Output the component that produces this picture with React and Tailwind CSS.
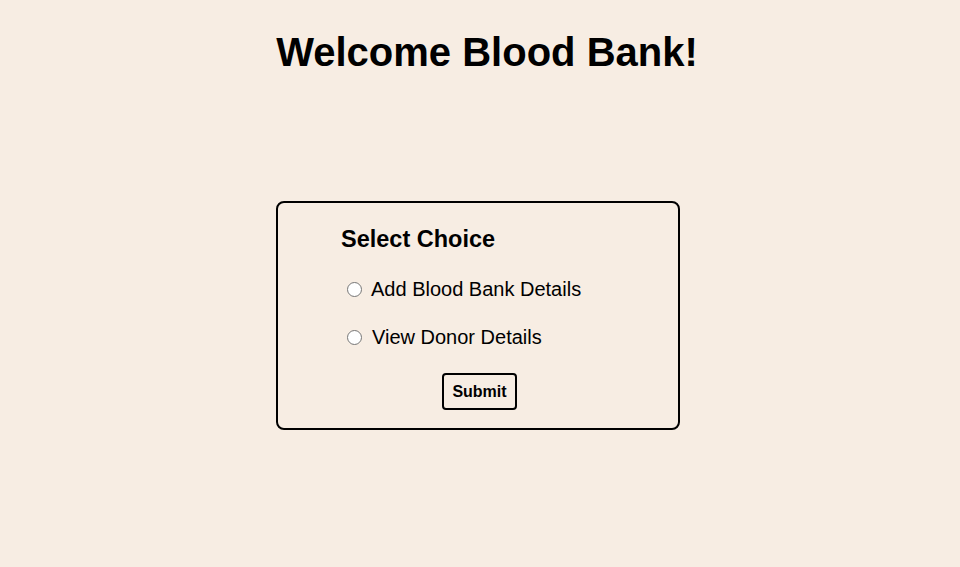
export default function App() {
  return (
    <div className="min-h-screen bg-[#f7ede3] font-['Liberation_Sans',Arial,sans-serif] text-black">
      <h1 className="pl-[14px] pt-[29px] text-center text-[40px] font-bold leading-[46px]">Welcome Blood Bank!</h1>
      <div className="ml-[276px] mt-[126px] box-border h-[229px] w-[404px] rounded-lg border-2 border-black">
        <div className="pl-[63px] pt-[23px]">
          <h2 className="text-[23.5px] font-bold leading-[27px]">Select Choice</h2>
        </div>
        <div className="mt-[24px] flex flex-col gap-[24px] pl-[69px]">
          <label className="flex h-[24px] items-center text-[20px] leading-[24px]">
            <input type="radio" name="choice" className="m-0 box-border h-[15px] w-[15px] appearance-none rounded-full border border-[#767676] bg-white" />
            <span className="ml-[9px]">Add Blood Bank Details</span>
          </label>
          <label className="flex h-[24px] items-center text-[20px] leading-[24px]">
            <input type="radio" name="choice" className="m-0 box-border h-[15px] w-[15px] appearance-none rounded-full border border-[#767676] bg-white" />
            <span className="ml-[10px]">View Donor Details</span>
          </label>
        </div>
        <div className="mt-[24px] flex justify-center pl-[3px]">
          <button className="box-border h-[37px] w-[75px] rounded-[4px] border-2 border-black text-[16px] font-bold leading-[19px]">
            Submit
          </button>
        </div>
      </div>
    </div>
  );
}
